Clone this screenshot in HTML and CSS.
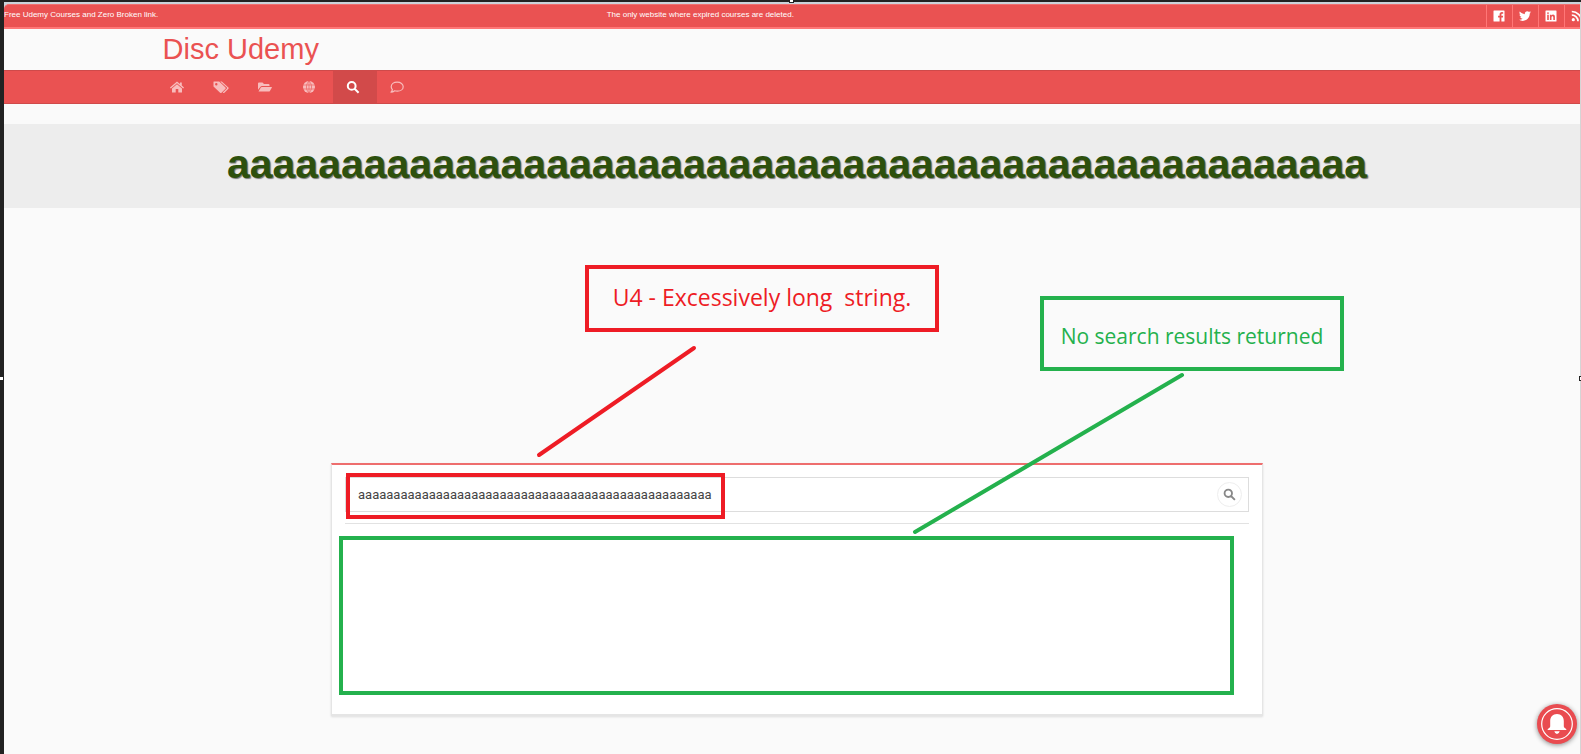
FILE: index.html
```html
<!DOCTYPE html>
<html lang="en">
<head>
<meta charset="utf-8">
<title>Disc Udemy</title>
<link rel="stylesheet" href="styles.css">
</head>
<body>
<div class="frame">
  <div class="page">
    <div class="topbar">
      <p>Free Udemy Courses and Zero Broken link.</p>
      <p>The only website where expired courses are deleted.</p>
      <div class="social">
        <a href="#" aria-label="Facebook"><svg viewBox="0 0 12 12"><path fill="currentColor" fill-rule="evenodd" d="M1 .5h10q.5 0 .5.5v10q0 .5-.5.5H8.4V7.4h1.5l.2-1.7H8.4V4.6c0-.5.2-.8.9-.8h.9V2.2L8.900 2.100C7.500 2.100 6.600 3 6.600 4.400v1.300H5.100v1.700h1.500v4.100H1q-.5 0-.5-.5V1Q.5.5 1 .5z"/></svg></a>
        <a href="#" aria-label="Twitter"><svg viewBox="0 0 512 512"><path fill="currentColor" d="M459 152c0 4 0 9 0 13 0 139-106 299-299 299-59 0-115-17-161-47 8 1 16 1 25 1 49 0 94-17 130-45-46-1-85-31-98-73 6 1 13 2 20 2 9 0 19-1 28-4-48-10-84-52-84-103v-1c14 8 30 13 47 13-28-19-47-51-47-87 0-19 5-37 14-53 52 64 129 105 216 110-2-8-3-16-3-24 0-58 47-105 105-105 30 0 58 13 77 33 24-5 46-13 67-25-8 24-24 45-46 58 21-2 42-8 60-16-14 21-32 39-52 54z"/></svg></a>
        <a href="#" aria-label="LinkedIn"><svg viewBox="0 0 12 12"><path fill="currentColor" fill-rule="evenodd" d="M1 .5h10q.5 0 .5.5v10q0 .5-.5.5H1q-.5 0-.5-.5V1Q.5.5 1 .5zM2.200 4.700v5.200h1.600V4.700zM3 2.200a.9.9 0 1 0 0 1.800.9.9 0 0 0 0-1.800zM4.900 4.700v5.200h1.600V7.300c0-1.500 1.800-1.600 1.800 0v2.600h1.600V6.700c0-2.400-2.500-2.700-3.400-1.300v-.7z"/></svg></a>
        <a href="#" aria-label="RSS"><svg viewBox="0 0 12 12"><g fill="none" stroke="currentColor" stroke-width="1.700"><path d="M.8 1.500a9.700 9.700 0 0 1 9.700 9.700M.8 5a6.200 6.200 0 0 1 6.200 6.200"/></g><circle cx="2.300" cy="9.700" r="1.600" fill="currentColor"/></svg></a>
      </div>
    </div>
    <header class="header"><a class="brand" href="#">Disc Udemy</a></header>
    <nav class="nav">
      <div class="menu">
        <a href="#" aria-label="Home"><svg viewBox="0 0 14 14"><path fill="currentColor" d="M7 1.500l3 2.600V2.500h1.800v3.100L14 7.500l-.8 1L7 3.300.8 8.500l-.8-1zM7 4.300l5 4.200V12.500H8.300V9H5.700v3.500H2v-4z"/></svg></a>
        <a href="#" aria-label="Coupons"><svg class="wide" viewBox="0 0 16 14"><path fill="currentColor" fill-rule="evenodd" d="M.8 1.500h5.400L12.500 7.400q.6.700 0 1.400l-4 4q-.7.600-1.400 0L.5 6.500V2q0-.5.3-.5zM3.300 3a1.200 1.200 0 1 0 0 2.400 1.200 1.200 0 0 0 0-2.400z"/><path fill="currentColor" d="M7.200 1.500h1.600l6.600 6q.6.600 0 1.300l-4 4q-.7.600-1.300 0l-.4-.2 4.200-4.200q.4-.4 0-.9z"/></svg></a>
        <a href="#" aria-label="Categories"><svg viewBox="0 0 14 14"><path fill="currentColor" d="M0 9.700V3.500q0-1 1-1h3.500l1.500 1.500h4.500q1 0 1 1v1H4q-1 0-1.500.8zM.5 11.500l2.300-4q.3-.6 1-.6h9.600q.8 0 .5.7l-2 3.300q-.4.600-1 .6z"/></svg></a>
        <a href="#" aria-label="Languages"><svg viewBox="0 0 14 14"><circle cx="7" cy="7" r="6" fill="currentColor"/><path fill="none" stroke="#ea5252" stroke-width=".6" d="M1 5h12M1 9h12M7 1v12M7 1C3.600 4.500 3.600 9.500 7 13M7 1c3.400 3.500 3.400 8.500 0 12"/></svg></a>
        <a href="#" class="active" aria-label="Search"><svg viewBox="0 0 14 14"><path fill="none" stroke="currentColor" stroke-width="2" d="M5.700 2a3.900 3.900 0 1 1 0 7.800 3.900 3.900 0 0 1 0-7.800M8.600 8.700l4 4"/></svg></a>
        <a href="#" aria-label="Contact"><svg viewBox="0 0 14 14"><path fill="none" stroke="currentColor" stroke-width="1.200" stroke-linejoin="round" d="M7.200 2.200c3.500 0 6 2 6 4.500s-2.500 4.500-6 4.500q-1.400 0-2.600-.4Q3 12.200 1 12.200q1.300-1.500 1.400-2.600Q1.200 8.400 1.200 6.700c0-2.500 2.500-4.500 6-4.500z"/></svg></a>
      </div>
    </nav>
    <main>
      <h1>aaaaaaaaaaaaaaaaaaaaaaaaaaaaaaaaaaaaaaaaaaaaaaaaaa</h1>
      <section class="card">
        <form class="search">
          <input type="text" aria-label="Search courses" value="aaaaaaaaaaaaaaaaaaaaaaaaaaaaaaaaaaaaaaaaaaaaaaaaaa">
          <button type="button" aria-label="Search"><svg viewBox="0 0 14 14"><path fill="none" stroke="currentColor" stroke-width="2" d="M5.700 1.700a4 4 0 1 1 0 8 4 4 0 0 1 0-8M8.600 8.600l4.200 4.200"/></svg></button>
        </form>
        <div class="results"></div>
      </section>
    </main>
  </div>
  <button class="bell" type="button" aria-label="Notifications"><svg viewBox="0 0 40 40"><circle cx="20" cy="20" r="15.300" fill="none" stroke="#fff" stroke-width="1.200"/><path fill="#fff" d="M20 10c4.300 0 6.800 3 6.800 7v5.500c0 1.500 2.700 2 2.700 3.500h-19c0-1.500 2.700-2 2.700-3.500V17c0-4 2.500-7 6.800-7zM17.300 27.300h5.400q-.7 2.700-2.700 2.700t-2.700-2.700z"/></svg></button>
</div>
<svg class="lines" width="1581" height="754"><g fill="none" stroke-width="4" stroke-linecap="round"><path stroke="#ee1c25" d="M694 348L539 455"/><path stroke="#24b14d" d="M1182 375L915 532"/></g></svg>
<div class="note note-string">U4 - Excessively long&nbsp; string.</div>
<div class="note note-empty">No search results returned</div>
<div class="mark mark-input"></div>
<div class="mark mark-results"></div>
<i class="handle handle-top"></i>
<i class="handle handle-left"></i>
<i class="handle handle-right"></i>
</body>
</html>
```
FILE: styles.css
```css
* { box-sizing: border-box; }
body {
  margin: 0;
  min-height: 100vh;
  display: flex;
  position: relative;
  padding: 2px 0 0 4px;
  overflow: hidden;
  background: #222;
  font-family: "Liberation Sans", Arial, sans-serif;
}
svg { display: block; }
a { color: inherit; text-decoration: none; }
p, h1 { margin: 0; }
.frame {
  flex: 1;
  min-width: 0;
  overflow: hidden;
  position: relative;
  background: #fafafa;
  border-right: 1px solid #d5d5d5;
}
.page { margin-right: -10px; border-top: 2px solid #cbd3da; background: #cbd3da; }
.topbar {
  display: grid;
  grid-template-columns: 38% 1fr auto;
  height: 25px;
  border-top: 1px solid #f07070;
  border-bottom: 2px solid #f77;
  border-top-left-radius: 5px;
  background: #ea5252;
  color: #fff;
  font-size: 8px;
  line-height: 20px;
}
.social { display: flex; }
.social a {
  width: 26px;
  padding-right: 2px;
  display: grid;
  place-items: center;
  border-left: 1px solid #f77;
}
.social svg { width: 12px; height: 12px; }
.header {
  background: #fafafa;
  padding: 4px 0;
}
.brand {
  display: block;
  width: 80%;
  margin: 0 auto;
  color: #ea5252;
  font-size: 29px;
  line-height: 33px;
}
.nav {
  background: #ea5252;
  border-top: 1px solid #cf4a4a;
  border-bottom: 1px solid #cf4a4a;
}
.menu {
  display: flex;
  max-width: 1280px;
  margin: 0 auto;
}
.menu a {
  width: 44px;
  height: 32px;
  padding-right: 4px;
  display: grid;
  place-items: center;
  color: #f8bcbc;
}
.menu svg { width: 14px; height: 14px; }
.menu .wide { width: 16px; }
.menu .active { background: #d24a4a; color: #fff; }
main { background: #fafafa; padding: 20px 0 38px; }
h1 {
  padding: 17px 0 21px;
  background: #ededed;
  color: #2d500d;
  text-align: center;
  font-size: 41px;
  line-height: 46px;
  text-shadow: 1px 1px 1px #777;
}
.card {
  width: 932px;
  max-width: 90%;
  margin: 255px auto 0;
  padding: 12px 13px 18px;
  background: #fff;
  border: 1px solid #e5e5e5;
  border-top: 2px solid #ee6e6e;
  border-bottom: 2px solid #e5e5e5;
  box-shadow: 0 1px 2px #ddd;
}
.search {
  display: flex;
  align-items: center;
  height: 35px;
  padding: 0 6px 0 0;
  border: 1px solid #ddd;
}
.search input {
  flex: 1;
  min-width: 0;
  border: 0;
  outline: 0;
  padding: 0 12px;
  background: none;
  color: #444;
  font: 13px Roboto, sans-serif;
}
.search button {
  width: 25px;
  height: 25px;
  padding: 0;
  display: grid;
  place-items: center;
  border: 1px solid #eee;
  border-radius: 50%;
  background: #fff;
  color: #888;
}
.search button svg { width: 13px; height: 13px; }
.results { margin-top: 11px; height: 173px; border-top: 1px solid #e2e2e2; }
.bell {
  position: absolute;
  right: 3px;
  bottom: 10px;
  width: 40px;
  height: 40px;
  padding: 0;
  border: 0;
  border-radius: 50%;
  background: #e94b50;
  box-shadow: 0 1px 5px #888;
}
.lines { position: absolute; left: 0; top: 0; }
.note {
  position: absolute;
  display: grid;
  place-items: center;
  border: 4px solid;
  font-family: "Open Sans", "Noto Sans", sans-serif;
}
.note-string { left: 585px; top: 265px; width: 354px; height: 67px; padding-bottom: 4px; color: #ee1c25; font-size: 23px; }
.note-empty { left: 1040px; top: 296px; width: 304px; height: 75px; padding-top: 4px; color: #24b14d; font-size: 21px; }
.mark { position: absolute; border: 4px solid; }
.mark-input { left: 346px; top: 473px; width: 379px; height: 46px; color: #ee1c25; }
.mark-results { left: 339px; top: 536px; width: 895px; height: 159px; color: #24b14d; }
.handle { position: absolute; width: 5px; height: 5px; background: #fff; border: 1px solid #222; }
.handle-top { left: 789px; top: -2px; }
.handle-left { left: -1px; top: 376px; }
.handle-right { right: -3px; top: 376px; }
```
